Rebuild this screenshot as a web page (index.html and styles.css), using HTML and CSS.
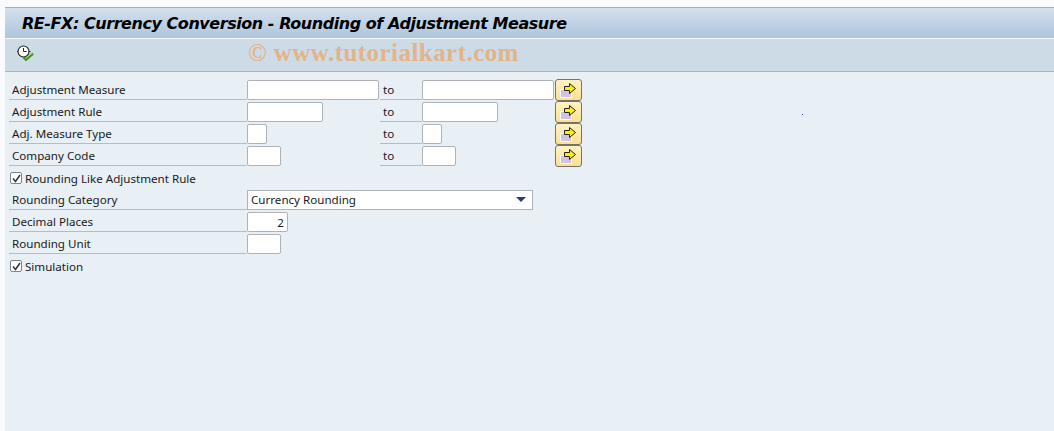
FILE: index.html
```html
<!DOCTYPE html>
<html lang="en">
<head>
    <meta charset="UTF-8">
    <meta name="viewport" content="width=device-width, initial-scale=1.0">
    <title>RE-FX: Currency Conversion - Rounding of Adjustment Measure</title>
    <link rel="stylesheet" href="styles.css">
</head>
<body>
    <div class="window">
        <div class="titlebar">
            <h1>RE-FX: Currency Conversion - Rounding of Adjustment Measure</h1>
        </div>
        <div class="toolbar">
            <button class="tool" type="button" aria-label="Execute">
                <svg width="18" height="18" viewBox="0 0 18 18">
                    <circle cx="6.500" cy="6.500" r="5.500" fill="#fff" stroke="#222" stroke-width="1.100"/>
                    <path d="M6.500 3v3.500M6.500 6.500h3M0 6.500h1M12 6.500h1.500" fill="none" stroke="#222"/>
                    <path d="M6.500 12l2.500 2.500L16 8.500" fill="none" stroke="#3f8f2c" stroke-width="2.600"/>
                    <path d="M8.500 13.500L15.500 8" fill="none" stroke="#a5de5c"/>
                </svg>
            </button>
            <span class="watermark">© www.tutorialkart.com</span>
        </div>
        <form class="form">
            <div class="row">
                <label class="label">Adjustment Measure</label>
                <div class="low"><input class="field w-long" type="text"></div>
                <span class="to">to</span>
                <div class="high"><input class="field w-long" type="text"></div>
                <button class="multi" type="button" aria-label="Multiple selection">
                    <svg width="18" height="18" viewBox="0 0 18 18">
                        <rect x="1.500" y="8.500" width="11" height="8" fill="#d3c3df" stroke="#fff"/>
                        <path d="M5.500 5.500h5v-3l6 5-6 5v-3h-5z" fill="#ffee00" stroke="#222"/>
                    </svg>
                </button>
            </div>
            <div class="row">
                <label class="label">Adjustment Rule</label>
                <div class="low"><input class="field w-rule" type="text"></div>
                <span class="to">to</span>
                <div class="high"><input class="field w-rule" type="text"></div>
                <button class="multi" type="button" aria-label="Multiple selection">
                    <svg width="18" height="18" viewBox="0 0 18 18">
                        <rect x="1.500" y="8.500" width="11" height="8" fill="#d3c3df" stroke="#fff"/>
                        <path d="M5.500 5.500h5v-3l6 5-6 5v-3h-5z" fill="#ffee00" stroke="#222"/>
                    </svg>
                </button>
            </div>
            <div class="row">
                <label class="label">Adj. Measure Type</label>
                <div class="low"><input class="field w-type" type="text"></div>
                <span class="to">to</span>
                <div class="high"><input class="field w-type" type="text"></div>
                <button class="multi" type="button" aria-label="Multiple selection">
                    <svg width="18" height="18" viewBox="0 0 18 18">
                        <rect x="1.500" y="8.500" width="11" height="8" fill="#d3c3df" stroke="#fff"/>
                        <path d="M5.500 5.500h5v-3l6 5-6 5v-3h-5z" fill="#ffee00" stroke="#222"/>
                    </svg>
                </button>
            </div>
            <div class="row">
                <label class="label">Company Code</label>
                <div class="low"><input class="field w-code" type="text"></div>
                <span class="to">to</span>
                <div class="high"><input class="field w-code" type="text"></div>
                <button class="multi" type="button" aria-label="Multiple selection">
                    <svg width="18" height="18" viewBox="0 0 18 18">
                        <rect x="1.500" y="8.500" width="11" height="8" fill="#d3c3df" stroke="#fff"/>
                        <path d="M5.500 5.500h5v-3l6 5-6 5v-3h-5z" fill="#ffee00" stroke="#222"/>
                    </svg>
                </button>
            </div>
            <div class="row">
                <label class="check">
                    <span class="box">
                        <svg width="9" height="9" viewBox="0 0 9 9"><path d="M1 4.500l2.500 3L8 1" fill="none" stroke="#333" stroke-width="1.500"/></svg>
                    </span>
                    Rounding Like Adjustment Rule
                </label>
            </div>
            <div class="row">
                <label class="label">Rounding Category</label>
                <div class="select">
                    <span>Currency Rounding</span>
                    <span class="arrow"></span>
                </div>
            </div>
            <div class="row">
                <label class="label">Decimal Places</label>
                <input class="field w-dec" type="text" value="2">
            </div>
            <div class="row">
                <label class="label">Rounding Unit</label>
                <input class="field w-code" type="text">
            </div>
            <div class="row">
                <label class="check">
                    <span class="box">
                        <svg width="9" height="9" viewBox="0 0 9 9"><path d="M1 4.500l2.500 3L8 1" fill="none" stroke="#333" stroke-width="1.500"/></svg>
                    </span>
                    Simulation
                </label>
            </div>
        </form>
        <span class="dot"></span>
    </div>
</body>
</html>
```

FILE: styles.css
```css
:root {
    --page-color: #e8f0f6;
    --line-color: #b5bdc4;
    --text-color: #1a1a1a;
    --font-family-ui: 'Noto Sans', 'DejaVu Sans', sans-serif;
}

html, body {
    height: 100%;
}

body {
    margin: 0;
    padding: 7px 0 0 5px;
    box-sizing: border-box;
    background-color: #f9fbfe;
    font-family: var(--font-family-ui);
    font-size: 11.6px;
    color: var(--text-color);
    overflow: hidden;
}

.window {
    position: relative;
    height: 100%;
    background-color: var(--page-color);
}

.titlebar {
    height: 30px;
    border-top: 1px solid #9fb0c0;
    display: flex;
    align-items: center;
    padding-left: 17px;
    background: linear-gradient(#d3e0ee, #aec5dc);
}

h1 {
    margin: 0;
    font-family: 'DejaVu Sans', sans-serif;
    font-size: 16px;
    font-weight: bold;
    font-style: italic;
    letter-spacing: -0.45px;
    color: #000;
}

.toolbar {
    height: 32px;
    border-top: 1px solid #f4f8fb;
    border-bottom: 1px solid #a7b4c0;
    display: flex;
    align-items: center;
    padding-left: 12px;
    background-color: #cddbe7;
}

.tool {
    width: 18px;
    height: 18px;
    margin-top: -2px;
    padding: 0;
    border: none;
    background: none;
}

.watermark {
    margin-left: 213px;
    margin-top: -5px;
    font-family: 'Liberation Serif', serif;
    font-size: 25px;
    font-weight: bold;
    letter-spacing: 0.45px;
    color: #e3b487;
}

.form {
    padding: 8px 0 0 4px;
}

.row {
    display: flex;
    height: 22px;
}

.label {
    box-sizing: border-box;
    width: 238px;
    height: 20px;
    padding: 2px 0 0 3px;
    border-bottom: 1px solid var(--line-color);
}

.low, .high {
    width: 133px;
}

.to {
    box-sizing: border-box;
    width: 42px;
    height: 20px;
    padding: 2px 0 0 3px;
    border-bottom: 1px solid var(--line-color);
}

.field {
    display: block;
    box-sizing: border-box;
    height: 20px;
    margin: 0;
    padding: 0 3px;
    border: 1px solid #adb3b9;
    border-radius: 2px;
    background-color: #fff;
    font-family: var(--font-family-ui);
    font-size: 11.6px;
    color: var(--text-color);
}

.w-long { width: 132px; }
.w-rule { width: 76px; }
.w-type { width: 20px; }
.w-code { width: 34px; }
.w-dec { width: 41px; text-align: right; }

.multi {
    box-sizing: border-box;
    width: 27px;
    height: 22px;
    margin-top: -1px;
    padding: 0 0 0 3px;
    border: 1px solid #77736a;
    border-radius: 3px;
    display: flex;
    align-items: center;
    background: linear-gradient(#fff3c4, #fbdf94);
}

.check {
    display: flex;
    align-items: center;
    gap: 3px;
    height: 20px;
    padding-left: 1px;
}

.box {
    box-sizing: border-box;
    width: 12px;
    height: 12px;
    border: 1px solid #7d858c;
    border-radius: 2px;
    background-color: #fff;
    display: flex;
    align-items: center;
    justify-content: center;
}

.select {
    box-sizing: border-box;
    width: 286px;
    height: 20px;
    padding: 0 6px 2px 3px;
    border: 1px solid #adb3b9;
    display: flex;
    align-items: center;
    justify-content: space-between;
    background-color: #fff;
}

.arrow {
    width: 0;
    height: 0;
    border-left: 5px solid transparent;
    border-right: 5px solid transparent;
    border-top: 5px solid #24416f;
}

.dot {
    position: absolute;
    left: 797px;
    top: 107px;
    width: 1px;
    height: 1px;
    background-color: #2b4fb0;
}
```
